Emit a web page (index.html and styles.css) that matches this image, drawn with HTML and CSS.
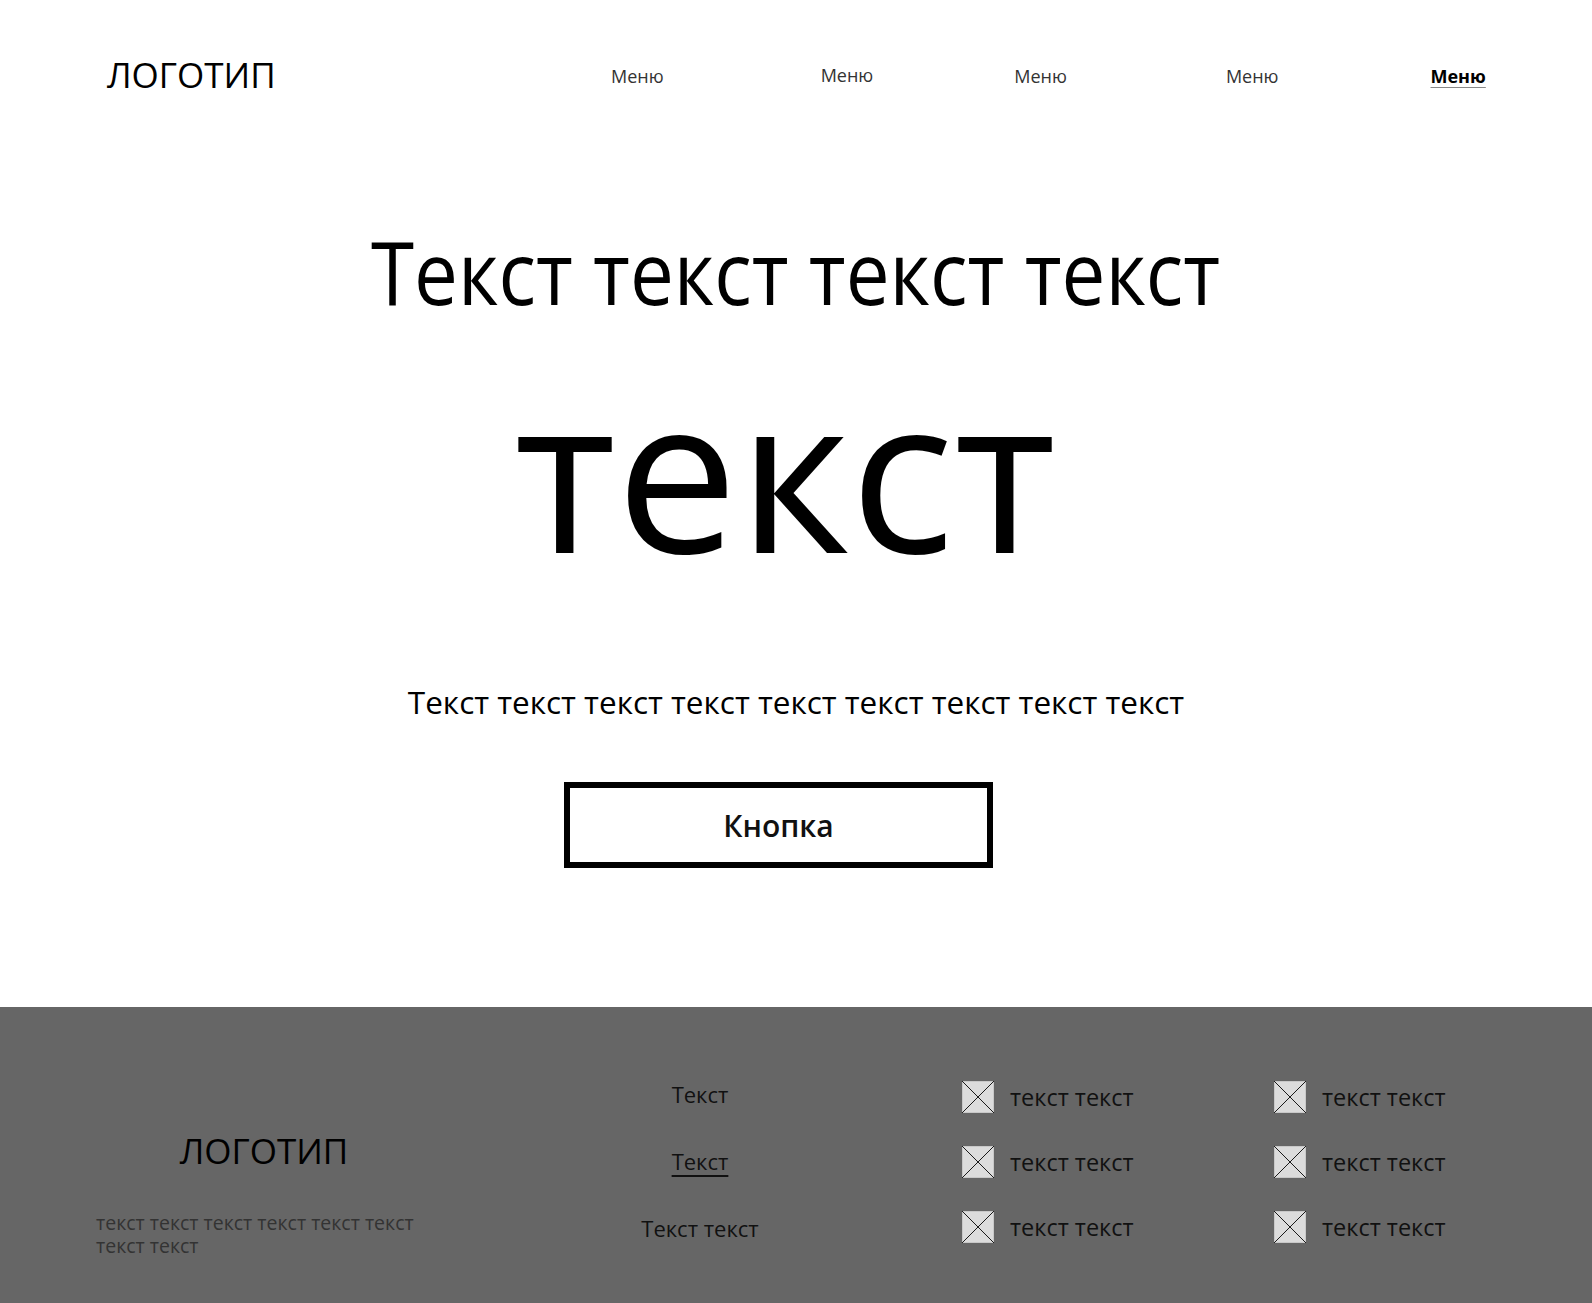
FILE: index.html
```html
<!DOCTYPE html>
<html lang="ru">
<head>
<meta charset="utf-8">
<title>Лендинг</title>
<link rel="stylesheet" href="styles.css">
</head>
<body>
<header class="header">
  <div class="logo">ЛОГОТИП</div>
  <nav class="nav">
    <a class="nav-link" href="#">Меню</a>
    <a class="nav-link" href="#">Меню</a>
    <a class="nav-link" href="#">Меню</a>
    <a class="nav-link" href="#">Меню</a>
    <a class="nav-link nav-link-active" href="#">Меню</a>
  </nav>
</header>
<main class="hero">
  <h1 class="hero-title"><span class="hero-title-text">Текст текст текст текст</span></h1>
  <div class="hero-big">текст</div>
  <p class="hero-sub">Текст текст текст текст текст текст текст текст текст</p>
  <a class="btn" href="#">Кнопка</a>
</main>
<footer class="footer">
  <div class="f-brand">
    <div class="f-logo">ЛОГОТИП</div>
    <p class="f-text">текст текст текст текст текст текст текст текст</p>
  </div>
  <div class="f-links">
    <a class="f-link" href="#">Текст</a>
    <a class="f-link f-link-under" href="#">Текст</a>
    <a class="f-link" href="#">Текст текст</a>
  </div>
  <ul class="f-list">
    <li class="f-item"><svg class="ph" viewBox="0 0 32 32"><rect x="0.5" y="0.5" width="31" height="31" fill="#dcdcdc" stroke="#c8c8c8"/><path d="M0 0L32 32M32 0L0 32" stroke="#1a1a1a" stroke-width="1"/></svg><span>текст текст</span></li>
    <li class="f-item"><svg class="ph" viewBox="0 0 32 32"><rect x="0.5" y="0.5" width="31" height="31" fill="#dcdcdc" stroke="#c8c8c8"/><path d="M0 0L32 32M32 0L0 32" stroke="#1a1a1a" stroke-width="1"/></svg><span>текст текст</span></li>
    <li class="f-item"><svg class="ph" viewBox="0 0 32 32"><rect x="0.5" y="0.5" width="31" height="31" fill="#dcdcdc" stroke="#c8c8c8"/><path d="M0 0L32 32M32 0L0 32" stroke="#1a1a1a" stroke-width="1"/></svg><span>текст текст</span></li>
  </ul>
  <ul class="f-list">
    <li class="f-item"><svg class="ph" viewBox="0 0 32 32"><rect x="0.5" y="0.5" width="31" height="31" fill="#dcdcdc" stroke="#c8c8c8"/><path d="M0 0L32 32M32 0L0 32" stroke="#1a1a1a" stroke-width="1"/></svg><span>текст текст</span></li>
    <li class="f-item"><svg class="ph" viewBox="0 0 32 32"><rect x="0.5" y="0.5" width="31" height="31" fill="#dcdcdc" stroke="#c8c8c8"/><path d="M0 0L32 32M32 0L0 32" stroke="#1a1a1a" stroke-width="1"/></svg><span>текст текст</span></li>
    <li class="f-item"><svg class="ph" viewBox="0 0 32 32"><rect x="0.5" y="0.5" width="31" height="31" fill="#dcdcdc" stroke="#c8c8c8"/><path d="M0 0L32 32M32 0L0 32" stroke="#1a1a1a" stroke-width="1"/></svg><span>текст текст</span></li>
  </ul>
</footer>
</body>
</html>
```
FILE: styles.css
```css
* { box-sizing: border-box; }
html, body { margin: 0; padding: 0; }
body {
  width: 1592px;
  font-family: "Open Sans", "Noto Sans", sans-serif;
  color: #000;
  background: #fff;
}
a { color: inherit; text-decoration: none; }

.header {
  display: flex;
  align-items: flex-start;
  padding: 52px 0 0 107px;
  height: 130px;
}
.logo {
  font-size: 35px;
  line-height: 46px;
  width: 504px;
  flex: none;
}
.nav {
  display: flex;
  padding-top: 12px;
}
.nav-link {
  font-size: 18px;
  line-height: 24px;
  color: #333;
}
.nav-link:nth-child(2) { margin-left: 157px; margin-top: -1px; }
.nav-link:nth-child(3) { margin-left: 141px; }
.nav-link:nth-child(4) { margin-left: 159px; }
.nav-link:nth-child(5) { margin-left: 152px; }
.nav-link-active {
  color: #000;
  font-weight: 700;
  text-decoration: underline;
  text-decoration-color: #888;
  text-decoration-thickness: 1px;
  text-underline-offset: 4px;
}

.hero {
  height: 877px;
  display: flex;
  flex-direction: column;
  align-items: center;
  padding-top: 91px;
}
.hero-title {
  margin: 0;
  font-size: 88px;
  font-weight: 400;
  line-height: 100px;
  white-space: nowrap;
}
.hero-title-text {
  display: inline-block;
  transform: scaleX(0.889);
}
.hero-big {
  margin: 33px 22px 0 0;
  font-size: 217px;
  line-height: 230px;
}
.hero-sub {
  margin: 98px 0 0;
  font-size: 31.5px;
  line-height: 40px;
}
.btn {
  margin: 60px 35px 0 0;
  width: 429px;
  height: 86px;
  border: 6px solid #000;
  display: flex;
  align-items: center;
  justify-content: center;
  font-size: 30px;
  font-weight: 600;
  color: #111;
}

.footer {
  height: 296px;
  background: #666;
  display: flex;
  align-items: flex-start;
  padding: 0 0 0 96px;
}
.f-brand {
  width: 336px;
  padding-top: 121px;
}
.f-logo {
  text-align: center;
  font-size: 35px;
  line-height: 46px;
}
.f-text {
  margin: 37px 0 0;
  font-size: 19.5px;
  line-height: 23px;
  color: #333;
}
.f-links {
  width: 536px;
  display: flex;
  flex-direction: column;
  align-items: center;
  padding: 72px 0 0 0;
  gap: 37px;
}
.f-link {
  font-size: 22px;
  line-height: 30px;
  color: #111;
}
.f-link-under {
  text-decoration: underline;
  text-underline-offset: 5px;
}
.f-list {
  list-style: none;
  margin: 0;
  padding: 74px 0 0;
  width: 312px;
  display: flex;
  flex-direction: column;
  gap: 33px;
}
.f-item {
  display: flex;
  align-items: center;
  gap: 16px;
  height: 32px;
  font-size: 23.5px;
  color: #111;
}
.ph { width: 32px; height: 32px; flex: none; }
.f-links + .f-list { margin-left: -6px; }
```
